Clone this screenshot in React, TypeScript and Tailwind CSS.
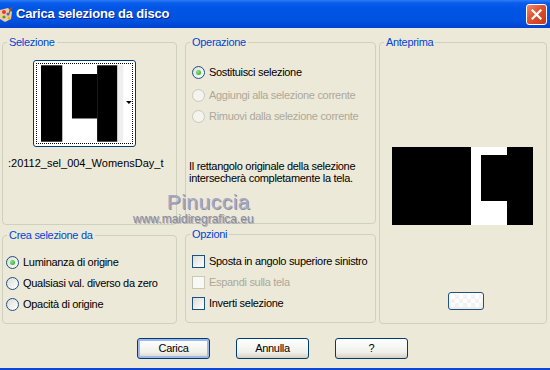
import React from "react";

const FONT = '"Liberation Sans", Arial, sans-serif';

function Group({
  title,
  className,
  children,
}: {
  title: string;
  className: string;
  children?: React.ReactNode;
}) {
  return (
    <div className={`relative border border-[#D0D0BF] rounded-[4px] ${className}`}>
      <span className="absolute left-[4px] -top-[8px] px-[2px] bg-[#ECE9D8] text-[#0046D5] text-[11px] leading-[14px] whitespace-nowrap">
        {title}
      </span>
      {children}
    </div>
  );
}

function Radio({ checked, disabled }: { checked?: boolean; disabled?: boolean }) {
  return (
    <span
      className={`relative shrink-0 inline-flex items-center justify-center w-[13px] h-[13px] rounded-full border ${
        disabled
          ? "border-[#CAC8BB] bg-[#F4F3EE]"
          : "border-[#1C5180] bg-[linear-gradient(135deg,#DCDCD7,#FFFFFF)]"
      }`}
    >
      {checked && (
        <span className="w-[5px] h-[5px] rounded-full bg-[radial-gradient(circle_at_35%_35%,#8BE58B,#21A121)]" />
      )}
    </span>
  );
}

function Check({ disabled }: { disabled?: boolean }) {
  return (
    <span
      className={`inline-block shrink-0 w-[13px] h-[13px] border ${
        disabled
          ? "border-[#CAC8BB] bg-[#F8F8F5]"
          : "border-[#1C5180] bg-[linear-gradient(135deg,#DCDCD7,#FFFFFF)]"
      }`}
    />
  );
}

function Btn({ label, def }: { label: string; def?: boolean }) {
  return (
    <button
      className={`w-[73px] h-[21px] rounded-[3px] border border-[#003C74] text-[11px] tracking-[-0.3px] text-black bg-[linear-gradient(#FFFFFF,#F0F0EA_70%,#D6D0C5)] ${
        def ? "shadow-[inset_0_0_0_2px_#9DB9EB]" : ""
      }`}
      style={{ fontFamily: FONT }}
    >
      {label}
    </button>
  );
}

export default function App() {
  return (
    <div
      className="w-[550px] h-[370px] overflow-hidden bg-[#ECE9D8] flex flex-col relative"
      style={{ fontFamily: FONT }}
    >
      {/* Title bar */}
      <div className="h-[28px] flex items-center bg-[linear-gradient(#2F7CF6_0px,#0A5DEB_3px,#0055E5_8px,#0053E1_20px,#0043CF_28px)]">
        <svg width="14" height="16" viewBox="0 0 14 16" className="mt-[1px] shrink-0">
          <path d="M0 3 L8 1 L12 5 L11 12 L5 15 L0 12 Z" fill="#F2C9A0" />
          <circle cx="4" cy="5" r="2" fill="#E23B2E" />
          <circle cx="8" cy="7" r="1.6" fill="#2E7BE0" />
          <circle cx="4" cy="10" r="1.6" fill="#3BAA3B" />
          <circle cx="9" cy="11" r="1.5" fill="#F0B400" />
          <path d="M10 1 L13 0 L8 9 Z" fill="#8B5A2B" />
        </svg>
        <span className="ml-[2px] text-white font-bold text-[13px] tracking-[-0.2px] [text-shadow:1px_1px_0_#0A1E8C]">
          Carica selezione da disco
        </span>
        <div className="ml-auto mr-[3px] w-[21px] h-[21px] rounded-[3px] border border-white bg-[linear-gradient(135deg,#F08A6A,#E0512F_45%,#C23A17)] flex items-center justify-center">
          <svg width="11" height="11" viewBox="0 0 11 11">
            <path d="M1.5 1.5 L9.5 9.5 M9.5 1.5 L1.5 9.5" stroke="white" strokeWidth="2.2" strokeLinecap="square" />
          </svg>
        </div>
      </div>

      {/* Body */}
      <div className="flex-1 flex flex-col border-b-2 border-[#0C47D6] tracking-[-0.3px]">
        <div className="flex pt-[14px] pl-[2px]">
          {/* Left column */}
          <div className="w-[175px] mr-[8px] flex flex-col">
            <Group title="Selezione" className="h-[183px]">
              <div className="mt-[17px] ml-[30px] w-[103px] h-[87px] rounded-[3px] border border-[#003C74] bg-white p-[2px] relative">
                <div className="w-full h-full border border-dotted border-black flex items-center pl-[4px]">
                  <svg width="86" height="79" viewBox="0 0 86 79">
                    <rect x="0" y="0" width="86" height="79" fill="#FFFFFF" />
                    <rect x="0" y="0" width="22" height="79" fill="#000" />
                    <rect x="32" y="9" width="26" height="46" fill="#000" />
                    <rect x="58" y="0" width="21" height="79" fill="#000" />
                    <rect x="79" y="0" width="6" height="79" fill="#EFEFEF" />
                  </svg>
                  <svg width="6" height="4" viewBox="0 0 6 4" className="ml-[2px] mt-[-2px]">
                    <path d="M0 0 H6 L3 3 Z" fill="#000" />
                  </svg>
                </div>
              </div>
              <div className="mt-[10px] ml-[5px] whitespace-nowrap text-[11px] leading-[13px] tracking-normal text-black">
                :20112_sel_004_WomensDay_t
              </div>
            </Group>
            <Group title="Crea selezione da" className="h-[89px] mt-[10px]">
              <div className="flex flex-col pt-[19px] pl-[3px] gap-[7px] text-[11px] leading-[14px] text-black whitespace-nowrap">
                <div className="flex items-center gap-[4px] h-[14px]">
                  <Radio checked />
                  <span>Luminanza di origine</span>
                </div>
                <div className="flex items-center gap-[4px] h-[14px]">
                  <Radio />
                  <span>Qualsiasi val. diverso da zero</span>
                </div>
                <div className="flex items-center gap-[4px] h-[14px]">
                  <Radio />
                  <span>Opacità di origine</span>
                </div>
              </div>
            </Group>
          </div>

          {/* Middle column */}
          <div className="w-[191px] mr-[3px] flex flex-col">
            <Group title="Operazione" className="h-[182px]">
              <div className="flex flex-col pt-[22px] pl-[6px] text-[11px] leading-[14px] whitespace-nowrap">
                <div className="flex items-center gap-[4px] h-[14px] text-black">
                  <Radio checked />
                  <span>Sostituisci selezione</span>
                </div>
                <div className="flex items-center gap-[4px] h-[14px] mt-[9px] text-[#ACA899]">
                  <Radio disabled />
                  <span>Aggiungi alla selezione corrente</span>
                </div>
                <div className="flex items-center gap-[4px] h-[14px] mt-[7px] text-[#ACA899]">
                  <Radio disabled />
                  <span>Rimuovi dalla selezione corrente</span>
                </div>
                <div className="mt-[37px] -ml-[3px] text-black text-[11px] leading-[12px]">
                  Il rettangolo originale della selezione
                  <br />
                  intersecherà completamente la tela.
                </div>
              </div>
            </Group>
            <Group title="Opzioni" className="h-[89px] mt-[10px]">
              <div className="flex flex-col pt-[19px] pl-[6px] gap-[7px] text-[11px] leading-[14px] whitespace-nowrap">
                <div className="flex items-center gap-[4px] h-[14px] text-black">
                  <Check />
                  <span>Sposta in angolo superiore sinistro</span>
                </div>
                <div className="flex items-center gap-[4px] h-[14px] text-[#ACA899]">
                  <Check disabled />
                  <span>Espandi sulla tela</span>
                </div>
                <div className="flex items-center gap-[4px] h-[14px] text-black">
                  <Check />
                  <span>Inverti selezione</span>
                </div>
              </div>
            </Group>
          </div>

          {/* Right column */}
          <div className="w-[168px]">
            <Group title="Anteprima" className="h-[282px] flex flex-col items-center">
              <svg width="141" height="78" viewBox="0 0 141 78" className="mt-[104px] ml-[-2px]">
                <rect x="0" y="0" width="141" height="78" fill="#000" />
                <rect x="79" y="0" width="36" height="78" fill="#FFF" />
                <rect x="89" y="8" width="26" height="46" fill="#000" />
              </svg>
              <div className="mt-[67px] ml-[6px] w-[36px] h-[18px] rounded-[3px] border border-[#1C5180] bg-[linear-gradient(#FBFBFB,#EDEDED)] flex items-center justify-center">
                <div className="w-[30px] h-[12px] bg-[repeating-conic-gradient(#F2F2F2_0_25%,#FFFFFF_0_50%)] bg-[length:8px_8px]" />
              </div>
            </Group>
          </div>
        </div>

        {/* Buttons */}
        <div className="flex mt-[14px] ml-[137px] gap-[26px]">
          <Btn label="Carica" def />
          <Btn label="Annulla" />
          <Btn label="?" />
        </div>
      </div>

      {/* Watermark */}
      <div className="absolute left-[133px] top-[190px] flex flex-col items-center pointer-events-none">
        <span className="text-[21px] leading-[24px] text-[#A9A9C2] [text-shadow:1px_1px_0_#8E8EA0] tracking-[0.5px] ml-[30px]">
          Pinuccia
        </span>
        <span className="text-[12px] leading-[14px] text-[#8A8A98] [text-shadow:1px_1px_0_#B0B0B8] -mt-[2px]">
          www.maidiregrafica.eu
        </span>
      </div>
    </div>
  );
}
